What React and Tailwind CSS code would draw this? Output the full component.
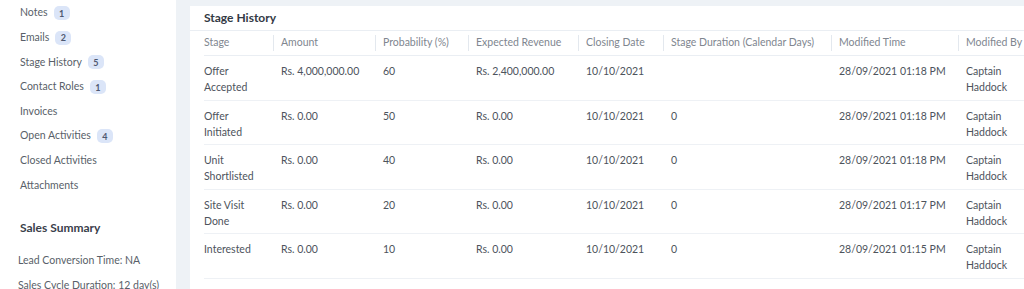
const navItems = [
  { label: 'Notes', count: 1 },
  { label: 'Emails', count: 2 },
  { label: 'Stage History', count: 5 },
  { label: 'Contact Roles', count: 1 },
  { label: 'Invoices' },
  { label: 'Open Activities', count: 4 },
  { label: 'Closed Activities' },
  { label: 'Attachments' },
]

const columns = [
  { label: 'Stage', width: 'w-[69px]', first: true },
  { label: 'Amount', width: 'w-[102px]' },
  { label: 'Probability (%)', width: 'w-[93px]' },
  { label: 'Expected Revenue', width: 'w-[110px]' },
  { label: 'Closing Date', width: 'w-[85px]' },
  { label: 'Stage Duration (Calendar Days)', width: 'w-[168px]' },
  { label: 'Modified Time', width: 'w-[127px]' },
  { label: 'Modified By', width: 'w-[70px]' },
]

const rows = [
  ['Offer Accepted', 'Rs. 4,000,000.00', '60', 'Rs. 2,400,000.00', '10/10/2021', '', '28/09/2021 01:18 PM', 'Captain Haddock'],
  ['Offer Initiated', 'Rs. 0.00', '50', 'Rs. 0.00', '10/10/2021', '0', '28/09/2021 01:18 PM', 'Captain Haddock'],
  ['Unit Shortlisted', 'Rs. 0.00', '40', 'Rs. 0.00', '10/10/2021', '0', '28/09/2021 01:18 PM', 'Captain Haddock'],
  ['Site Visit Done', 'Rs. 0.00', '20', 'Rs. 0.00', '10/10/2021', '0', '28/09/2021 01:17 PM', 'Captain Haddock'],
  ['Interested', 'Rs. 0.00', '10', 'Rs. 0.00', '10/10/2021', '0', '28/09/2021 01:15 PM', 'Captain Haddock'],
]

function Sidebar() {
  return (
    <div className="w-[176px] shrink-0 bg-white pt-[1px]">
      <ul className="pl-[20px]">
        {navItems.map((item) => (
          <li key={item.label} className="h-[24.6px] flex items-center text-[10.5px] text-[#595f69]">
            <span>{item.label}</span>
            {item.count && (
              <span className="ml-[6px] h-[14px] min-w-[16px] px-[4px] rounded-[5px] bg-[#dbe5f8] text-[9px] font-bold text-[#4e5870] flex items-center justify-center leading-none">
                {item.count}
              </span>
            )}
          </li>
        ))}
      </ul>
      <div className="pl-[20px] pt-[22px] text-[12px] leading-[16px] font-bold text-[#3a404b]">Sales Summary</div>
      <div className="pl-[18px] pt-[16px] text-[10.5px] leading-[16px] text-[#595f69]">Lead Conversion Time: NA</div>
      <div className="pl-[18px] pt-[9px] text-[10.5px] leading-[16px] text-[#595f69]">Sales Cycle Duration: 12 day(s)</div>
    </div>
  )
}

function StageHistory() {
  return (
    <div className="flex-1 bg-white overflow-hidden">
      <div className="h-[25px] flex items-center pl-[14px] border-b border-[#eaeef3] text-[12px] font-bold text-[#333944]">
        Stage History
      </div>
      <div className="pl-[14px] w-[960px]">
        <div className="flex h-[25px] items-center border-b border-[#eaeef3] text-[10.5px] text-[#80868f]">
          {columns.map((col) => (
            <div key={col.label} className={`${col.width} shrink-0 flex items-center whitespace-nowrap`}>
              {!col.first && <span className="h-[16px] border-l border-[#e3e8ee]" />}
              <span className={col.first ? '' : 'pl-[7px]'}>{col.label}</span>
            </div>
          ))}
        </div>
        {rows.map((row, i) => (
          <div key={i} className="flex border-b border-[#eef1f5] pt-[7px] pb-[4.5px] text-[10.5px] leading-[16px] text-[#4d535c]">
            {row.map((cell, j) => (
              <div
                key={j}
                className={`${columns[j].width} shrink-0 ${columns[j].first ? 'pr-[8px]' : 'pl-[8px] pr-[6px]'} ${j === 6 ? 'whitespace-nowrap' : ''}`}
              >
                {cell}
              </div>
            ))}
          </div>
        ))}
      </div>
    </div>
  )
}

export default function App() {
  return (
    <div className="w-[1024px] h-[289px] overflow-hidden flex bg-[#eef2f6]" style={{ fontFamily: 'Lato, "Noto Sans", sans-serif' }}>
      <Sidebar />
      <div className="flex-1 flex pt-[6px] pl-[14px] pr-[6px]">
        <StageHistory />
      </div>
    </div>
  )
}
